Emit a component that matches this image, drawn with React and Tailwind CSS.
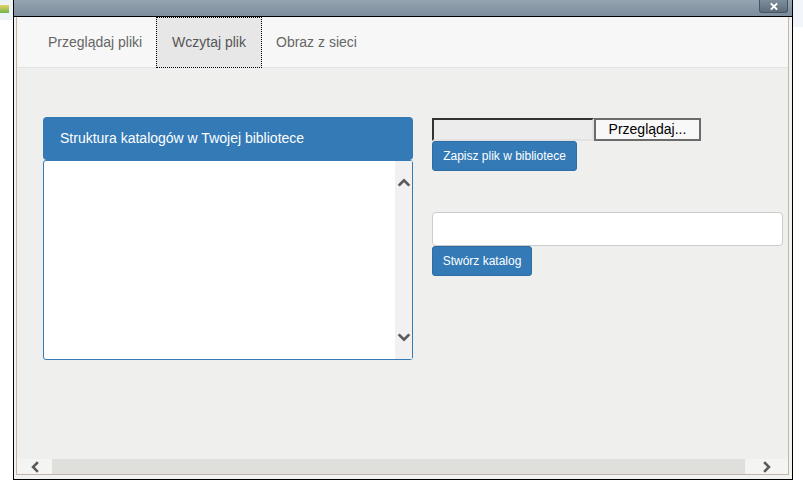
import React from 'react';

const Chevron = ({ dir, className }) => {
  const pts = {
    up: '2,8 6,4 10,8',
    down: '2,4 6,8 10,4',
    left: '8,2 4,6 8,10',
    right: '4,2 8,6 4,10',
  }[dir];
  return (
    <svg viewBox="0 0 12 12" className={className}>
      <polyline points={pts} fill="none" stroke="#5a5a5a" strokeWidth="2.5" strokeLinecap="square" />
    </svg>
  );
};

export default function App() {
  return (
    <div className="flex h-[492px] w-[803px] overflow-hidden bg-white font-['Liberation_Sans',Arial,sans-serif]">
      {/* desktop strip left */}
      <div className="w-[13px] shrink-0">
        <div className="h-[20px] bg-[#edf2f8] pt-[5px]">
          <div className="h-[8px] w-[9px] bg-gradient-to-b from-[#e6d36a] to-[#6fb24a]" />
        </div>
      </div>

      {/* window */}
      <div className="flex h-[480px] w-[780px] shrink-0 flex-col border-x border-b border-black">
        {/* title bar */}
        <div className="relative h-[17px] border-b border-black bg-gradient-to-b from-[#95a4b1] to-[#7d8d9b]">
          <div className="absolute right-[4px] top-0 flex h-[13px] w-[29px] items-center justify-center rounded-b-[3px] border border-t-0 border-[#475664] bg-gradient-to-b from-[#7f8e9c] to-[#5d6d7c]">
            <svg viewBox="0 0 10 10" className="h-[9px] w-[10px]">
              <path d="M1.5 1.5 L8.5 8.5 M8.5 1.5 L1.5 8.5" stroke="white" strokeWidth="2.2" />
            </svg>
          </div>
        </div>

        {/* frame */}
        <div className="flex flex-1 bg-[#f2f2f2] pb-[4px] pl-[2px] pr-[3px]">
          <div className="flex flex-1 flex-col border-x border-b border-[#c3b5a7]">
            {/* tabs */}
            <div className="flex h-[51px] border-b border-[#e3e3e3] bg-[#f7f7f7] text-[14px]">
              <div className="ml-[15px] flex w-[124px] items-center pl-[16px] text-[#666]">Przeglądaj pliki</div>
              <div className="-mb-px flex w-[106px] items-center justify-center border border-dotted border-black bg-[#e7e7e7] text-[#555]">
                Wczytaj plik
              </div>
              <div className="flex items-center pl-[14px] text-[#666]">Obraz z sieci</div>
            </div>

            {/* body */}
            <div className="flex flex-1 bg-[#efefed] pl-[26px] pt-[49px]">
              {/* panel */}
              <div className="flex w-[370px] flex-col self-start">
                <div className="flex h-[43px] items-center rounded-[4px] bg-[#337ab7] pl-[17px] text-[14px] text-white">
                  Struktura katalogów w Twojej bibliotece
                </div>
                <div className="flex h-[200px] justify-end rounded-[3px] border border-[#337ab7] bg-white">
                  <div className="flex w-[17px] flex-col items-center justify-between bg-[#f1f1f1] pb-[15px] pt-[15px]">
                    <Chevron dir="up" className="h-[13px] w-[14px]" />
                    <Chevron dir="down" className="h-[13px] w-[14px]" />
                  </div>
                </div>
              </div>

              {/* right column */}
              <div className="ml-[19px] mt-px flex w-[351px] flex-col items-start">
                <div className="flex h-[23px]">
                  <div className="w-[162px] border-2 border-b-[#e2e2e2] border-l-[#333] border-r-[#e2e2e2] border-t-[#333] bg-[#ececec]" />
                  <div className="flex w-[107px] items-center justify-center border-2 border-[#6b6b6b] bg-[#f8f8f8] text-[14px] text-black">
                    Przeglądaj...
                  </div>
                </div>
                <button className="w-[145px] rounded-[3px] border border-[#2e6da4] bg-[#337ab7] py-[5px] text-[12px] leading-[18px] text-white">
                  Zapisz plik w bibliotece
                </button>
                <div className="mt-[41px] h-[34px] w-[351px] rounded-[4px] border border-[#ccc] bg-white" />
                <button className="w-[100px] rounded-[3px] border border-[#2e6da4] bg-[#337ab7] py-[5px] text-[12px] leading-[18px] text-white">
                  Stwórz katalog
                </button>
              </div>
            </div>

            {/* horizontal scrollbar */}
            <div className="flex h-[15px]">
              <div className="flex w-[35px] items-center justify-center bg-[#f4f4f2]">
                <Chevron dir="left" className="h-[12px] w-[12px]" />
              </div>
              <div className="flex-1 bg-[#dfdfdb]" />
              <div className="flex w-[43px] items-center justify-center bg-[#f4f4f2]">
                <Chevron dir="right" className="h-[12px] w-[12px]" />
              </div>
            </div>
          </div>
        </div>
      </div>

      {/* desktop strip right */}
      <div className="flex-1">
        <div className="h-[27px] bg-[#f2f5fa]" />
      </div>
    </div>
  );
}
